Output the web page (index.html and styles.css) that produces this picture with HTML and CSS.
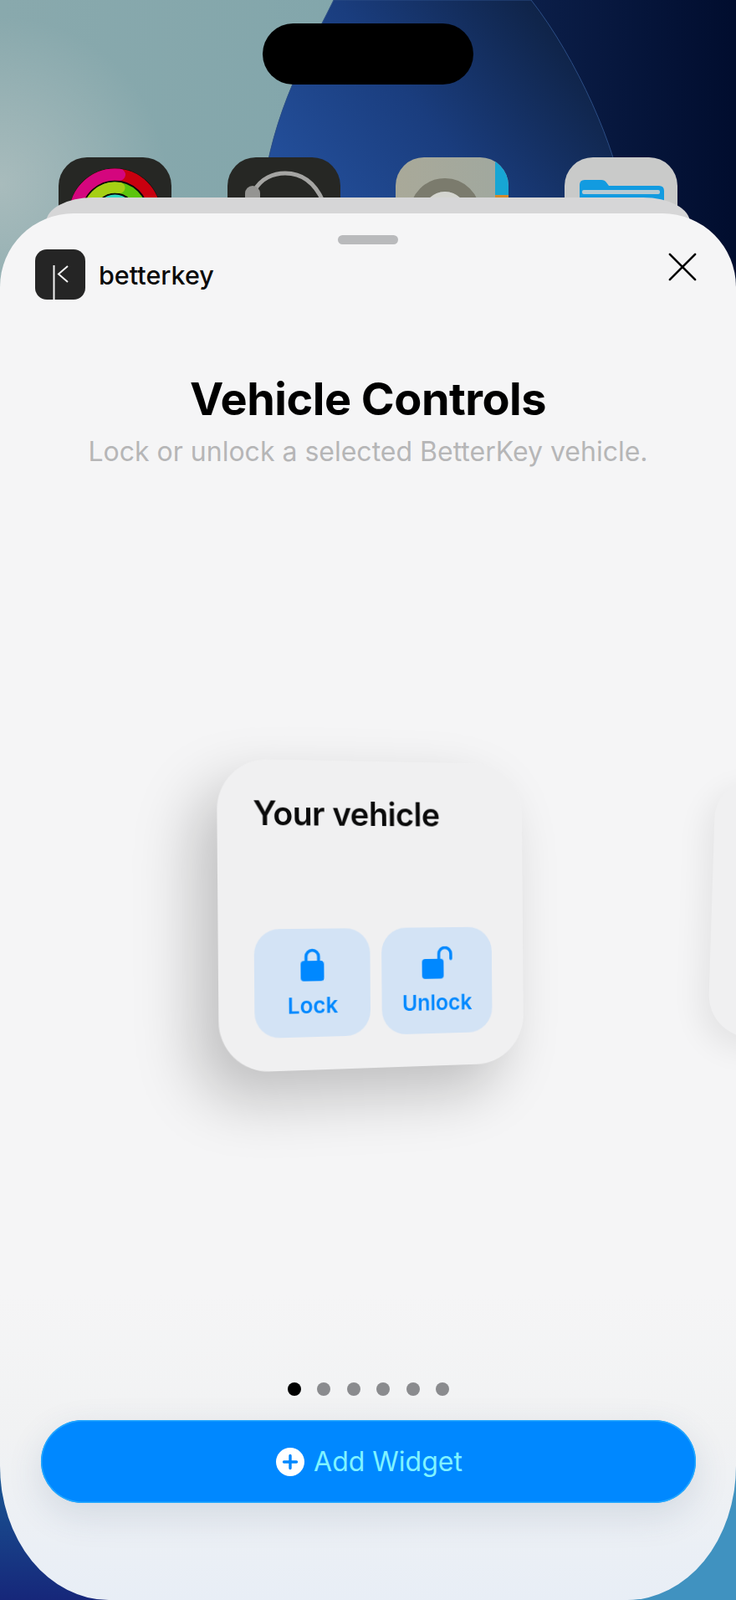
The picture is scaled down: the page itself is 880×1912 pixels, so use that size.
FILE: index.html
```html
<!DOCTYPE html>
<html>
<head>
	<title>Vehicle Controls</title>
	<link rel="stylesheet" href="styles.css">
</head>
<body>
	<div class="screen">
		<svg class="wallpaper" viewBox="0 0 880 1912" preserveAspectRatio="none">
			<defs>
				<linearGradient id="wall-teal" x1="0" y1="0" x2="1" y2="0">
					<stop offset="0" stop-color="#89a9ad"/>
					<stop offset="1" stop-color="#7ba3a9"/>
				</linearGradient>
				<radialGradient id="wall-glow" gradientUnits="userSpaceOnUse" cx="0" cy="220" r="200">
					<stop offset="0" stop-color="#b0c0c0" stop-opacity="0.8"/>
					<stop offset="1" stop-color="#b0c0c0" stop-opacity="0"/>
				</radialGradient>
				<linearGradient id="wall-blue" gradientUnits="userSpaceOnUse" x1="340" y1="230" x2="640" y2="0">
					<stop offset="0" stop-color="#24509c"/>
					<stop offset="0.5" stop-color="#1a3d7e"/>
					<stop offset="1" stop-color="#0f2347"/>
				</linearGradient>
				<linearGradient id="wall-navy" gradientUnits="userSpaceOnUse" x1="640" y1="100" x2="880" y2="100">
					<stop offset="0" stop-color="#0b1e48"/>
					<stop offset="1" stop-color="#010d2e"/>
				</linearGradient>
				<linearGradient id="corner-left" x1="0" y1="0" x2="0" y2="1">
					<stop offset="0" stop-color="#1b6a9e"/>
					<stop offset="1" stop-color="#16277a"/>
				</linearGradient>
			</defs>
			<rect width="880" height="1912" fill="url(#wall-teal)"/>
			<rect width="300" height="450" fill="url(#wall-glow)"/>
			<rect x="600" width="280" height="400" fill="url(#wall-navy)"/>
			<path d="M399 0 C370 60 325 130 313 240 L745 240 C738 180 690 70 635 0 Z" fill="url(#wall-blue)" stroke="#2b4d85" stroke-width="1"/>
			<rect y="1700" width="440" height="212" fill="url(#corner-left)"/>
			<rect x="440" y="1700" width="440" height="212" fill="#4092c0"/>
		</svg>

		<div class="island"></div>

		<div class="home-row">
			<div class="home-icon icon-activity">
				<svg viewBox="0 0 135 80">
					<circle cx="67.5" cy="68" r="55" fill="#0a0a0a"/>
					<circle cx="67.5" cy="68" r="47.5" fill="none" stroke="#c9000f" stroke-width="14"/>
					<path d="M73 20.8 A47.5 47.5 0 0 0 20 68" fill="none" stroke="#d4067e" stroke-width="14" stroke-linecap="round"/>
					<circle cx="67.5" cy="68" r="32" fill="none" stroke="#5cc40c" stroke-width="13"/>
					<path d="M73 36.5 A32 32 0 0 0 35.5 68" fill="none" stroke="#a6cf14" stroke-width="13" stroke-linecap="round"/>
					<circle cx="67.5" cy="68" r="19" fill="none" stroke="#2fd6c0" stroke-width="9"/>
				</svg>
			</div>
			<div class="home-icon icon-dark">
				<svg viewBox="0 0 135 80">
					<path d="M32 40 C40 25 55 19 69 19 C90 19 105 32 114 52" fill="none" stroke="#a5a5a3" stroke-width="5"/>
					<circle cx="30" cy="43" r="9" fill="#949492"/>
					<rect x="21" y="43" width="18" height="30" fill="#949492"/>
				</svg>
			</div>
			<div class="home-icon icon-music">
				<svg viewBox="0 0 135 80">
					<rect x="119" y="0" width="16" height="80" fill="#17a6d4"/>
					<rect x="119" y="45" width="16" height="35" fill="#d38a2d"/>
					<circle cx="59" cy="67" r="34" fill="none" stroke="#7b7b6d" stroke-width="16"/>
					<circle cx="59" cy="67" r="26" fill="#d4d5d0"/>
				</svg>
			</div>
			<div class="home-icon icon-files">
				<svg viewBox="0 0 135 80">
					<path d="M18 50 V33 Q18 27 24 27 H44 Q48 27 50 30 L53 34 H113 Q119 34 119 40 V80 H18 Z" fill="#129be0"/>
					<rect x="21" y="39" width="93" height="5" rx="2" fill="#b6cad2"/>
				</svg>
			</div>
		</div>

		<div class="sheet-back"></div>

		<div class="sheet">
			<div class="grabber"></div>
			<div class="sheet-top">
				<div class="app-badge">
					<div class="app-logo">
						<svg viewBox="0 0 60 60">
							<path d="M22.5 19 V60" fill="none" stroke="#f2f2f2" stroke-width="2"/>
							<path d="M39 20 L28 29.5 L39 39" fill="none" stroke="#f2f2f2" stroke-width="2"/>
						</svg>
					</div>
					<span class="app-name">betterkey</span>
				</div>
				<svg class="close-icon" viewBox="0 0 36 36">
					<path d="M2 2 L34 34 M34 2 L2 34" fill="none" stroke="#000" stroke-width="2.8" stroke-linecap="round"/>
				</svg>
			</div>

			<h1 class="title">Vehicle Controls</h1>
			<p class="subtitle">Lock or unlock a selected BetterKey vehicle.</p>

			<div class="stage">
				<div class="widget">
					<div class="widget-name">Your vehicle</div>
					<div class="widget-actions">
						<div class="action action-lock">
							<svg class="action-icon" viewBox="0 0 30 40">
								<path d="M7.5 18 V10 A7.5 7.5 0 0 1 22.5 10 V18" fill="none" stroke="#0088ff" stroke-width="3.6"/>
								<rect x="1" y="15" width="28" height="24" rx="4" fill="#0088ff"/>
							</svg>
							<span>Lock</span>
						</div>
						<div class="action action-unlock">
							<svg class="action-icon" viewBox="0 0 40 40">
								<path d="M22 18 V9 A7.5 7.5 0 0 1 37 9 V15" fill="none" stroke="#0088ff" stroke-width="3.6" stroke-linecap="round"/>
								<rect x="1" y="15" width="27" height="24" rx="4" fill="#0088ff"/>
							</svg>
							<span>Unlock</span>
						</div>
					</div>
				</div>
				<div class="widget-next"></div>
			</div>

			<div class="dots">
				<span class="dot dot-active"></span>
				<span class="dot"></span>
				<span class="dot"></span>
				<span class="dot"></span>
				<span class="dot"></span>
				<span class="dot"></span>
			</div>

			<div class="add-btn">
				<svg class="add-icon" viewBox="0 0 34 34">
					<circle cx="17" cy="17" r="17" fill="#fff"/>
					<path d="M17 9.5 V24.5 M9.5 17 H24.5" stroke="#0088ff" stroke-width="3.4" stroke-linecap="round"/>
				</svg>
				<span>Add Widget</span>
			</div>
		</div>
	</div>
</body>
</html>
```

FILE: styles.css
```css
:root {
  --blue: #0088ff;
  --tile: #d3e3f5;
}

html, body {
  margin: 0;
  padding: 0;
}

body {
  background-color: #000;
  font-family: Inter, "Liberation Sans", sans-serif;
}

.screen {
  position: relative;
  width: 880px;
  height: 1912px;
  overflow: hidden;
}

.wallpaper {
  position: absolute;
  top: 0;
  left: 0;
  width: 880px;
  height: 1912px;
}

.island {
  position: absolute;
  top: 28px;
  left: 314px;
  width: 252px;
  height: 73px;
  border-radius: 37px;
  background-color: #000;
}

.home-row {
  position: relative;
  display: flex;
  justify-content: space-between;
  padding: 188px 70px 0;
}

.home-icon {
  width: 135px;
  height: 80px;
  border-radius: 34px 34px 0 0;
  overflow: hidden;
}

.home-icon svg {
  display: block;
  width: 135px;
  height: 80px;
}

.icon-activity, .icon-dark {
  background-color: #262724;
}

.icon-music {
  background: linear-gradient(90deg, #a9a999, #a0a89f);
}

.icon-files {
  background-color: #c9cac9;
}

.sheet-back {
  position: absolute;
  top: 236px;
  left: 55px;
  width: 770px;
  height: 60px;
  border-radius: 56px 56px 0 0 / 30px 30px 0 0;
  background-color: #d6d6d7;
}

.sheet {
  position: absolute;
  top: 255px;
  left: 0;
  width: 880px;
  height: 1657px;
  box-sizing: border-box;
  display: flex;
  flex-direction: column;
  border-radius: 88px 88px 130px 130px / 88px 88px 160px 160px;
  background: linear-gradient(180deg, #f5f5f6 0%, #f5f5f6 78%, #f1f2f3 88%, #e8eef6 100%);
}

.grabber {
  align-self: center;
  width: 72px;
  height: 11px;
  margin-top: 26px;
  border-radius: 6px;
  background-color: #b9babc;
}

.sheet-top {
  display: flex;
  justify-content: space-between;
  align-items: flex-start;
  padding: 0 47px 0 42px;
}

.app-badge {
  display: flex;
  align-items: center;
  gap: 16px;
  margin-top: 6px;
}

.app-logo {
  width: 60px;
  height: 60px;
  border-radius: 14px;
  overflow: hidden;
  background-color: #252525;
}

.app-logo svg {
  display: block;
  width: 60px;
  height: 60px;
}

.app-name {
  font-size: 30.5px;
  font-weight: 500;
  color: #0a0a0a;
}

.close-icon {
  width: 34px;
  height: 34px;
  margin-top: 10px;
}

.title {
  margin: 87px 0 0;
  text-align: center;
  font-size: 54px;
  line-height: 64px;
  font-weight: 700;
  letter-spacing: -0.5px;
  color: #000;
}

.subtitle {
  margin: 11px 0 0;
  text-align: center;
  font-size: 32px;
  line-height: 40px;
  font-weight: 400;
  color: #b6b6b7;
}

.stage {
  position: relative;
  flex: 1;
  display: flex;
  justify-content: center;
  align-items: flex-start;
  padding-top: 350px;
  padding-left: 14px;
}

.widget {
  box-sizing: border-box;
  width: 373px;
  height: 366px;
  padding: 39px 40px 39px 42px;
  display: flex;
  flex-direction: column;
  justify-content: space-between;
  border-radius: 60px;
  background-color: #f0f0f1;
  box-shadow: -26px 32px 70px rgba(0, 0, 0, 0.22);
  transform: perspective(1500px) rotateY(12.5deg) rotateZ(-0.45deg);
}

.widget-name {
  font-size: 39px;
  font-weight: 600;
  letter-spacing: -0.5px;
  color: #0a0a0a;
}

.widget-actions {
  display: flex;
  gap: 14px;
}

.action {
  flex: 1;
  height: 128px;
  display: flex;
  flex-direction: column;
  align-items: center;
  justify-content: center;
  gap: 12px;
  border-radius: 30px;
  background-color: var(--tile);
  font-size: 26px;
  font-weight: 600;
  color: var(--blue);
}

.action-icon {
  height: 40px;
}

.action-lock svg {
  width: 30px;
}

.action-unlock svg {
  width: 40px;
}

.widget-next {
  position: absolute;
  top: 370px;
  left: 851px;
  width: 120px;
  height: 310px;
  border-radius: 50px;
  background-color: #f0f0f1;
  box-shadow: -10px 14px 36px rgba(0, 0, 0, 0.07);
  transform: rotateZ(1.8deg);
}

.dots {
  display: flex;
  justify-content: center;
  gap: 19.5px;
  margin-bottom: 29px;
  padding-left: 1px;
}

.dot {
  width: 16px;
  height: 16px;
  border-radius: 50%;
  background-color: #8a8b8e;
}

.dot-active {
  background-color: #000;
}

.add-btn {
  box-sizing: border-box;
  align-self: center;
  width: 783px;
  height: 99px;
  margin-bottom: 116px;
  padding-left: 3px;
  display: flex;
  align-items: center;
  justify-content: center;
  gap: 11px;
  border-radius: 50px;
  background-color: var(--blue);
  box-shadow: inset 0 0 0 1.5px #22a8ff, 0 14px 44px rgba(40, 70, 110, 0.14);
  font-size: 32px;
  color: #7ff3ff;
}

.add-icon {
  width: 34px;
  height: 34px;
}
```
